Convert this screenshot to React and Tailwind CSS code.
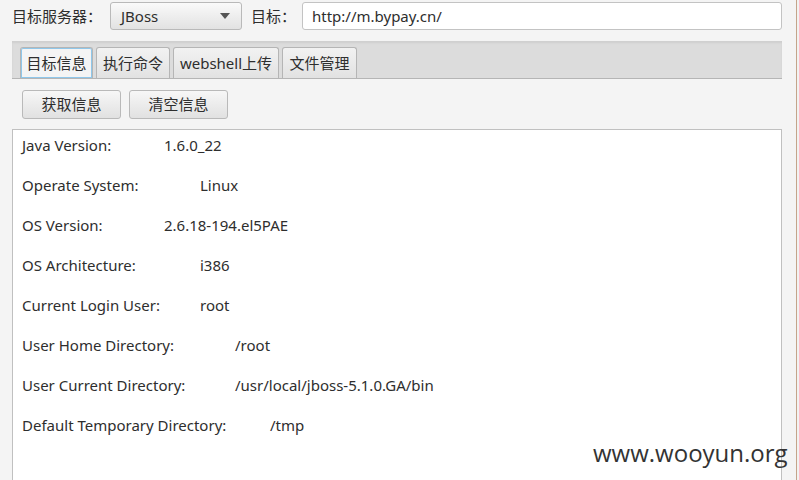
import React from 'react';

const rows = [
  { label: 'Java Version:', value: '1.6.0_22', x: 142 },
  { label: 'Operate System:', value: 'Linux', x: 178 },
  { label: 'OS Version:', value: '2.6.18-194.el5PAE', x: 142 },
  { label: 'OS Architecture:', value: 'i386', x: 178 },
  { label: 'Current Login User:', value: 'root', x: 178 },
  { label: 'User Home Directory:', value: '/root', x: 213 },
  { label: 'User Current Directory:', value: '/usr/local/jboss-5.1.0.GA/bin', x: 213 },
  { label: 'Default Temporary Directory:', value: '/tmp', x: 248 },
];

const tabs = [
  { label: '目标信息', w: 'w-[73px]' },
  { label: '执行命令', w: 'w-[74px]' },
  { label: 'webshell上传', w: 'w-[106px]' },
  { label: '文件管理', w: 'w-[75px]' },
];

export default function App() {
  return (
    <div
      className="relative w-[799px] h-[480px] overflow-hidden bg-[#f4f4f4] text-[15px] text-[#2e2e2e]"
      style={{ fontFamily: '"Noto Sans", "Noto Sans CJK SC", sans-serif' }}
    >
      <div className="flex h-full">
        <div className="flex-1 flex flex-col pl-3 pr-[14px]">
          {/* top row */}
          <div className="flex items-center h-[28px] mt-[2px]">
            <span className="w-[98px]">目标服务器：</span>
            <div className="flex items-center justify-between w-[132px] h-[28px] px-[10px] rounded-[3px] border border-[#b9b9b9] bg-gradient-to-b from-[#fafafa] to-[#e2e2e2]">
              <span>JBoss</span>
              <svg width="10" height="6" viewBox="0 0 10 6" className="mr-[1px]">
                <path d="M0 0h10L5 6z" fill="#555" />
              </svg>
            </div>
            <span className="ml-[9px] w-[51px]">目标：</span>
            <div className="flex-1 flex items-center h-[28px] px-[9px] rounded-[3px] border border-[#c3c3c3] bg-white">
              http://m.bypay.cn/
            </div>
          </div>

          {/* tab header */}
          <div className="mt-[11px] h-[38px] flex items-end gap-[3px] pl-[8px] bg-[#dcdcdc] border-b border-[#b5b5b5] shadow-[inset_0_2px_2px_#cfcfcf]">
            {tabs.map((t, i) => (
              <div
                key={t.label}
                className={
                  i === 0
                    ? `${t.w} h-[31px] flex items-center justify-center rounded-t-[3px] border border-[#b5b5b5] border-b-0 bg-[#f4f4f4] shadow-[inset_0_0_0_1px_#8fc7ea]`
                    : `${t.w} h-[31px] flex items-center justify-center rounded-t-[3px] border border-[#b5b5b5] border-b-0 bg-gradient-to-b from-[#f2f2f2] to-[#e2e2e2]`
                }
              >
                {t.label}
              </div>
            ))}
          </div>

          {/* buttons */}
          <div className="flex gap-[8px] pl-[10px] mt-[11px]">
            {['获取信息', '清空信息'].map((b) => (
              <div
                key={b}
                className="w-[99px] h-[29px] flex items-center justify-center rounded-[3px] border border-[#b9b9b9] bg-gradient-to-b from-[#f7f7f7] to-[#e1e1e1]"
              >
                {b}
              </div>
            ))}
          </div>

          {/* output area */}
          <div className="mt-[10px] flex-1 bg-white border border-[#c0c0c0] border-b-0 pl-[9px] pt-[3px]">
            {rows.map((r) => (
              <div key={r.label} className="flex h-[40px] leading-[24px]">
                <span className="w-[0px] whitespace-nowrap">{r.label}</span>
                <span className="whitespace-nowrap" style={{ marginLeft: r.x }}>{r.value}</span>
              </div>
            ))}
          </div>
        </div>
        <div className="w-[3px] h-full border-l border-[#c4a48a] bg-[#f2f2f2]" />
      </div>

      <div
        className="absolute left-[593px] top-[435px] text-[24px] text-[#333]"
        style={{ fontFamily: '"Open Sans", "Noto Sans", sans-serif' }}
      >
        www.wooyun.org
      </div>
    </div>
  );
}
